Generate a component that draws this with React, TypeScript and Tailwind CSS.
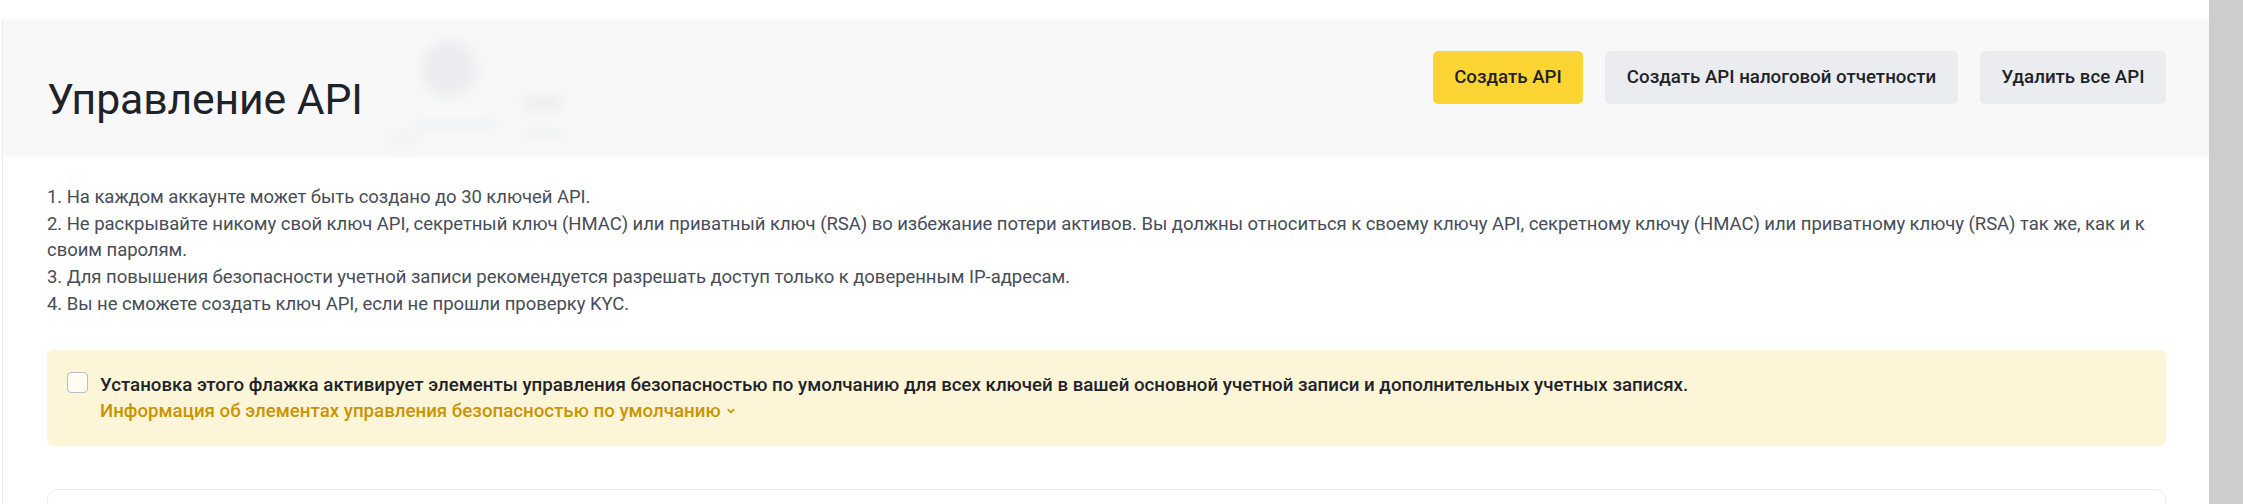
import React from "react";

const NOTES = [
  "1. На каждом аккаунте может быть создано до 30 ключей API.",
  "2. Не раскрывайте никому свой ключ API, секретный ключ (HMAC) или приватный ключ (RSA) во избежание потери активов. Вы должны относиться к своему ключу API, секретному ключу (HMAC) или приватному ключу (RSA) так же, как и к",
  "своим паролям.",
  "3. Для повышения безопасности учетной записи рекомендуется разрешать доступ только к доверенным IP-адресам.",
  "4. Вы не сможете создать ключ API, если не прошли проверку KYC.",
];

function HeaderArt() {
  // faint blurred illustration behind the title
  return (
    <div className="pointer-events-none absolute left-[370px] top-[10px] h-[130px] w-[220px]">
      <div className="absolute left-[48px] top-[12px] h-[56px] w-[56px] rounded-full bg-[#eaecef] blur-[6px]" />
      <div className="absolute left-[150px] top-[66px] h-[16px] w-[40px] rounded-full bg-[#edeef0] blur-[6px]" />
      <div className="absolute left-[40px] top-[92px] h-[8px] w-[84px] rounded-full bg-[#eff0f2] blur-[5px]" />
      <div className="absolute left-[152px] top-[102px] h-[7px] w-[36px] rounded-full bg-[#eff0f2] blur-[5px]" />
      <div className="absolute left-[18px] top-[104px] h-[14px] w-[24px] rounded-full bg-[#f1f2f3] blur-[6px]" />
    </div>
  );
}

export default function App() {
  return (
    <div className="flex h-[504px] w-full overflow-hidden bg-white font-['Roboto',sans-serif] text-[#1e2329]">
      <div className="flex-1 pt-[19px]">
        <div className="ml-[2px] h-full border-l border-[#eaecef]">
          <header className="relative flex h-[138px] items-start justify-between bg-[#f8f8f8] pl-[44px] pr-[43px]">
            <HeaderArt />
            <h1 className="relative mt-[54px] text-[42.7px] font-normal leading-[53px] tracking-[-0.1px]">
              Управление API
            </h1>
            <div className="relative mt-[32px] flex gap-[22px]">
              <button className="h-[53px] w-[150px] rounded-[5px] bg-[#fcd535] text-[18.7px] font-medium">
                Создать API
              </button>
              <button className="h-[53px] w-[353px] rounded-[5px] bg-[#eaecef] text-[18.7px] font-medium">
                Создать API налоговой отчетности
              </button>
              <button className="h-[53px] w-[186px] rounded-[5px] bg-[#eaecef] text-[18.7px] font-medium">
                Удалить все API
              </button>
            </div>
          </header>

          <div className="pl-[44px] pr-[43px] pt-[27px]">
            <div className="text-[18.5px] leading-[26.7px] tracking-[-0.05px] text-[#474d57]">
              {NOTES.map((line) => (
                <div key={line} className="whitespace-nowrap">
                  {line}
                </div>
              ))}
            </div>

            <div className="mt-[32px] flex gap-[12px] rounded-[6px] bg-[#fdf5d8] px-[20px] pb-[22px] pt-[22px]">
              <span className="h-[21px] w-[21px] shrink-0 rounded-[4px] border border-[#b7bdc6] bg-[#fefbf0]" />
              <div className="text-[18.7px] leading-[26px]">
                <div className="font-medium text-[#1e2329]">
                  Установка этого флажка активирует элементы управления безопасностью по умолчанию для всех ключей в вашей основной учетной записи и дополнительных учетных записях.
                </div>
                <div className="flex items-center gap-[5px] font-medium text-[#c99400]">
                  Информация об элементах управления безопасностью по умолчанию
                  <svg width="10" height="10" viewBox="0 0 10 10" fill="none">
                    <path d="M2.2 3.6 5 6.4 7.8 3.6" stroke="#c99400" strokeWidth="1.6" strokeLinecap="round" strokeLinejoin="round" />
                  </svg>
                </div>
              </div>
            </div>

            <div className="mt-[43px] h-[60px] rounded-t-[10px] border border-[#eaecef]" />
          </div>
        </div>
      </div>
      <div className="w-[34px] shrink-0 bg-[#cdcdcd]" />
    </div>
  );
}
